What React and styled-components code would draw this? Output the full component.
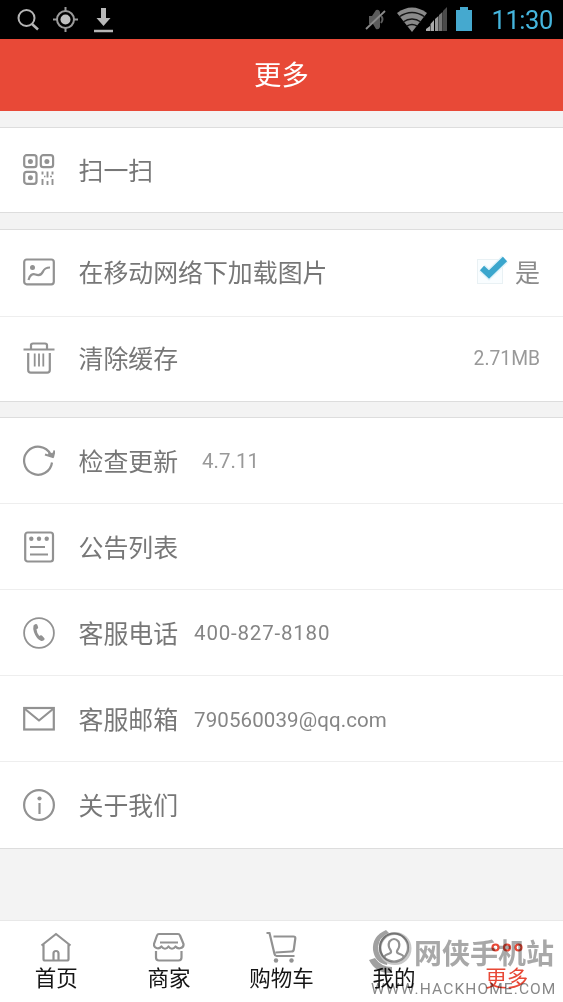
import React from 'react';
import styled, { createGlobalStyle } from 'styled-components';

const GlobalStyle = createGlobalStyle`
  * {
    box-sizing: border-box;
  }

  body {
    margin: 0;
    background-color: #f3f3f3;
    font-family: Roboto, 'Noto Sans CJK SC', sans-serif;
  }

  svg {
    display: block;
    flex: none;
  }
`;

// Styled Components
const Screen = styled.div`
  position: relative;
  display: flex;
  flex-direction: column;
  width: 563px;
  height: 1002px;
  overflow: hidden;
  background-color: #f3f3f3;
`;

const StatusBar = styled.div`
  display: flex;
  justify-content: space-between;
  height: 39px;
  background-color: #000000;
`;

const Clock = styled.span`
  padding: 0 10px 0 18px;
  font-size: 25.5px;
  line-height: 41px;
  letter-spacing: -0.4px;
  color: #45b5dd;
`;

const StatusGroup = styled.div`
  display: flex;
`;

const Header = styled.header`
  height: 72px;
  padding-top: 1px;
  background-color: #e84937;
  color: #ffffff;
  font-size: 27.4px;
  line-height: 72px;
  text-align: center;
`;

const Content = styled.main`
  display: flex;
  flex-direction: column;
  flex: 1;
  gap: 16px;
  padding-top: 16px;
`;

const Card = styled.section`
  margin-top: ${(props) => (props.$tight ? -1 : 0)}px;
  background-color: #ffffff;
  border-top: 1px solid #dddddd;
  border-bottom: 1px solid #dddddd;
`;

const Row = styled.div`
  display: flex;
  align-items: center;
  height: ${(props) => props.$height || 86}px;
  padding: 0 23px ${(props) => props.$lift || 0}px;

  & + & {
    border-top: 1px solid #eeeeee;
  }
`;

const Label = styled.span`
  margin-left: 23.5px;
  padding-top: 4px;
  font-size: 24.9px;
  line-height: 36px;
  color: #777777;
  white-space: nowrap;
`;

const Detail = styled.span`
  margin-left: ${(props) => props.$gap || 16}px;
  padding-top: ${(props) => props.$drop || 1}px;
  font-size: ${(props) => props.$size || 20.5}px;
  line-height: 28px;
  letter-spacing: ${(props) => props.$spacing || 0}px;
  color: ${(props) => props.$color || '#858585'};
`;

const Right = styled.div`
  display: flex;
  align-items: center;
  margin-left: auto;
`;

const Yes = styled.span`
  margin-left: 5px;
  padding-top: 4px;
  font-size: 25px;
  line-height: 36px;
  color: #8b8b8b;
`;

const TabBar = styled.nav`
  display: grid;
  grid-template-columns: repeat(5, 1fr);
  height: 82px;
  background-color: #ffffff;
  border-top: 1px solid #e8e8e8;
`;

const Tab = styled.div`
  display: flex;
  flex-direction: column;
  align-items: center;
  padding-top: 10.5px;
  font-size: 21.5px;
  line-height: 30px;
  color: ${(props) => (props.$active ? '#e84937' : '#151515')};
`;

const Watermark = styled.div`
  position: absolute;
  left: 367px;
  bottom: 2px;
  width: 194px;
  height: 72px;
  color: #a8a8a8;
  mix-blend-mode: multiply;
`;

const WatermarkName = styled.div`
  position: absolute;
  left: 47px;
  top: 7px;
  font-size: 28px;
  font-weight: 700;
  line-height: 40px;
  white-space: nowrap;
`;

const WatermarkUrl = styled.div`
  position: absolute;
  left: 4px;
  top: 50px;
  font-size: 15.5px;
  line-height: 22px;
  letter-spacing: 1.1px;
  color: #888888;
  white-space: nowrap;
`;

const LeftStatusIcons = () => (
  <svg width="140" height="39" fill="none" stroke="#b5b5b5" strokeWidth="2">
    <circle cx="26.5" cy="18" r="8" />
    <path d="M32 24l6 5.500" strokeWidth="2.500" />
    <g stroke="#9a9a9a">
      <circle cx="65.500" cy="19.500" r="8.500" />
      <path d="M65.500 7v5M65.500 27v5M53 19.500h5M73 19.500h5" />
    </g>
    <circle cx="65.500" cy="19.500" r="5" fill="#c0c0c0" stroke="none" />
    <path d="M101 8h5v10h4.500l-7 8-7-8h4.500z" fill="#b9b9b9" stroke="none" />
    <path d="M94 31h19" strokeWidth="2.500" />
  </svg>
);

const RightStatusIcons = () => (
  <svg width="112" height="39" fill="none">
    <path d="M8 16h3l4-6q3-1 4 2v15q-1 3-4 2l-3-5H8z" fill="#5c5c5c" />
    <path d="M20 16q3 3 0 7" stroke="#5c5c5c" strokeWidth="2" />
    <path d="M5 29L24 11" stroke="#8a8a8a" strokeWidth="1.800" />
    <path d="M36 13q15-11 30 0L51 32z" fill="#8a8a8a" />
    <path d="M38 17q13-9 26 0M42 22q9-6 18 0M46 26q5-3 10 0" stroke="#161616" strokeWidth="1.500" />
    <path d="M65 31v-2l4-3v5zM69.500 31v-7l3.500-4v11z" fill="#aaaaaa" />
    <path d="M74 31V19l3.500-3v15z" fill="#999999" />
    <path d="M78 31V15l3.500-3v19z" fill="#777777" />
    <path d="M82 31V11l4-4v24z" fill="#4b4b4b" />
    <path d="M95 10h4V7h8v3h4v21H95z" fill="#45a9cf" />
  </svg>
);

const icons = {
  scan: (
    <>
      <rect x="1.200" y="1.200" width="12.300" height="12" rx="2.500" />
      <rect x="17.800" y="1.200" width="12.300" height="12" rx="2.500" />
      <rect x="1.200" y="17.800" width="12.300" height="12" rx="2.500" />
      <g fill="currentColor" stroke="none">
        <circle cx="7.400" cy="7.400" r="2.500" />
        <circle cx="23.900" cy="7.400" r="2.500" />
        <circle cx="7.400" cy="23.700" r="2.500" />
      </g>
      <path
        d="M19.500 17.500v3M19.500 25v6M24.500 17.500v6M24.500 27v4M29.500 17.500v3M29.500 25v6"
        strokeWidth="1.900"
      />
      <path d="M21 22.500h1.500M27 22.500h2" strokeWidth="1.500" />
    </>
  ),
  image: (
    <>
      <rect x="1.200" y="3.500" width="29.600" height="24.800" rx="2.500" />
      <circle cx="9.500" cy="11.500" r="2.500" fill="currentColor" stroke="none" />
      <path d="M5.500 24c1-5 4-6.500 7-5.500 4 1.500 6 .5 7.500-3s4-4 7-4" />
    </>
  ),
  trash: (
    <>
      <path d="M.5 7.500h31M8 7V3q0-1.500 2-1.500h12q2 0 2 1.500v4M5.200 11v17q0 2.700 2.700 2.700h16.200q2.700 0 2.700-2.700V11" />
      <path d="M11.700 11.500v13M16 11.500v13M20.300 11.500v13" strokeWidth="1.800" />
    </>
  ),
  refresh: (
    <>
      <path d="M29 17.500A14 14 0 1 1 27.500 9.200" />
      <path d="M22 9.500l8 2.500 1.500-6.500" />
      <path d="M25 9l5 3 .8-4z" fill="currentColor" strokeWidth="1" />
    </>
  ),
  notice: (
    <>
      <rect x="2.200" y="1.500" width="27.800" height="29" rx="2.500" />
      <g fill="currentColor" stroke="none">
        <circle cx="8.300" cy="7.800" r="2.200" />
        <circle cx="16" cy="7.800" r="2.200" />
        <circle cx="23.700" cy="7.800" r="2.200" />
      </g>
      <path d="M7 16h15M7 23.500h18" />
    </>
  ),
  phone: (
    <>
      <circle cx="16" cy="16" r="14.900" strokeWidth="1.800" />
      <path
        d="M10.500 8.500l1.500-1.200q1.500-1 2.300.5l.9 2.600q.1 1.200-1.700 1.800.3 4 2.800 6.800 1.500-1.500 2.600-.4l2.500 2.600q.8 1.200-.6 2.100-1.500 1-3 .5-4.500-2-6.800-8.500-1.200-4-.5-6.800z"
        fill="currentColor"
        stroke="none"
      />
    </>
  ),
  mail: (
    <>
      <rect x="1.200" y="5" width="29.600" height="21.500" strokeLinejoin="miter" />
      <path d="M2 6L16 17.500 30 6" />
    </>
  ),
  about: (
    <>
      <circle cx="16" cy="16" r="14.900" />
      <circle cx="16.500" cy="9.500" r="2.100" fill="currentColor" stroke="none" />
      <path d="M16.500 14v11" />
    </>
  ),
  home: (
    <>
      <path d="M1.500 13.500L16 2l14.500 11.500M3.500 12v15q0 1.500 1.500 1.500h22q1.500 0 1.500-1.500V12" />
      <path d="M13.500 28v-6.500q0-2.500 2.500-2.500t2.500 2.500V28" />
    </>
  ),
  shop: (
    <>
      <path d="M6 2h19q1.500 0 2 1.500l3.500 8.500c.5 4-5 6-8 2.500-2 3-5 3-7 0-2 3-5 3-7 0-3 3.500-8 1.500-7.500-2.500L4 3.500Q4.500 2 6 2zM7 10.500h18M3 19v6.500q0 3 3 3h19.500q3 0 3-3V19" />
    </>
  ),
  cart: (
    <>
      <path d="M1.500 1h3l5 21q.5 2 2 2h18M8.500 4.500h20q2 0 1.800 2l-1.500 11q-.3 2-2.300 2l-16 1" />
      <circle cx="11" cy="28.500" r="2.200" fill="currentColor" stroke="none" />
      <circle cx="26.500" cy="28.500" r="2.200" fill="currentColor" stroke="none" />
    </>
  ),
  user: (
    <>
      <circle cx="16" cy="15.500" r="14" />
      <path d="M6.500 25q0-2 5-3.500 2.500-1 1-3.500-3-4-1-8.500 4.500-5 9 0 2 4.500-1 8.500-1.500 2.500 1 3.500 5 1.500 5 3.500" />
    </>
  ),
  more: (
    <>
      <circle cx="4.500" cy="15.500" r="3" />
      <circle cx="16" cy="15.500" r="3" />
      <circle cx="27.500" cy="15.500" r="3" />
    </>
  ),
};

const Icon = ({ name, color = '#929292' }) => (
  <svg
    width="32"
    height="32"
    viewBox="0 0 32 32"
    fill="none"
    color={color}
    stroke="currentColor"
    strokeWidth="2.2"
    strokeLinejoin="round"
  >
    {icons[name]}
  </svg>
);

const CheckBox = () => (
  <svg width="34" height="36" fill="none">
    <rect x="1.500" y="5.500" width="25" height="24" fill="#f9fdff" stroke="#e9f1f4" />
    <path d="M6 14l7 6.500L29 5" stroke="#dff3fa" strokeWidth="9" />
    <path d="M6 14l7 6.500L29 5" stroke="#3aa6cd" strokeWidth="6" />
  </svg>
);

const tabs = [
  { icon: 'home', label: '首页' },
  { icon: 'shop', label: '商家' },
  { icon: 'cart', label: '购物车' },
  { icon: 'user', label: '我的' },
  { icon: 'more', label: '更多', active: true },
];

const App = () => {
  return (
    <Screen>
      <GlobalStyle />
      <StatusBar>
        <LeftStatusIcons />
        <StatusGroup>
          <RightStatusIcons />
          <Clock>11:30</Clock>
        </StatusGroup>
      </StatusBar>
      <Header>更多</Header>

      <Content>
        <Card>
          <Row $height={84}>
            <Icon name="scan" />
            <Label>扫一扫</Label>
          </Row>
        </Card>

        <Card>
          <Row $lift={3}>
            <Icon name="image" />
            <Label>在移动网络下加载图片</Label>
            <Right>
              <CheckBox />
              <Yes>是</Yes>
            </Right>
          </Row>
          <Row $height={85} $lift={3}>
            <Icon name="trash" />
            <Label>清除缓存</Label>
            <Right>
              <Detail $size={19.3} $drop={2} $color="#999999">2.71MB</Detail>
            </Right>
          </Row>
        </Card>

        <Card $tight>
          <Row $height={85}>
            <Icon name="refresh" />
            <Label>检查更新</Label>
            <Detail $gap={24} $color="#999999">4.7.11</Detail>
          </Row>
          <Row>
            <Icon name="notice" />
            <Label>公告列表</Label>
          </Row>
          <Row>
            <Icon name="phone" />
            <Label>客服电话</Label>
            <Detail $spacing={0.8}>400-827-8180</Detail>
          </Row>
          <Row>
            <Icon name="mail" />
            <Label>客服邮箱</Label>
            <Detail $drop={2} $spacing={0.1}>790560039@qq.com</Detail>
          </Row>
          <Row $height={87} $lift={1}>
            <Icon name="about" />
            <Label>关于我们</Label>
          </Row>
        </Card>
      </Content>

      <TabBar>
        {tabs.map((tab) => (
          <Tab key={tab.icon} $active={tab.active}>
            <Icon name={tab.icon} color={tab.active ? '#e84937' : '#929292'} />
            {tab.label}
          </Tab>
        ))}
      </TabBar>

      <Watermark>
        <svg width="50" height="48" fill="none">
          <path d="M19 2Q5 8 6 22q2 13 14 15l1-4Q11 29 11 19 12 9 22 5z" fill="#a0a0a0" />
          <path d="M2 32l6-2q6 9 17 9v6Q9 46 2 32z" fill="#a0a0a0" />
          <circle cx="28" cy="20.5" r="15" stroke="#c8c8c8" strokeWidth="3" />
        </svg>
        <WatermarkName>网侠手机站</WatermarkName>
        <WatermarkUrl>WWW.HACKHOME.COM</WatermarkUrl>
      </Watermark>
    </Screen>
  );
};

export default App;
